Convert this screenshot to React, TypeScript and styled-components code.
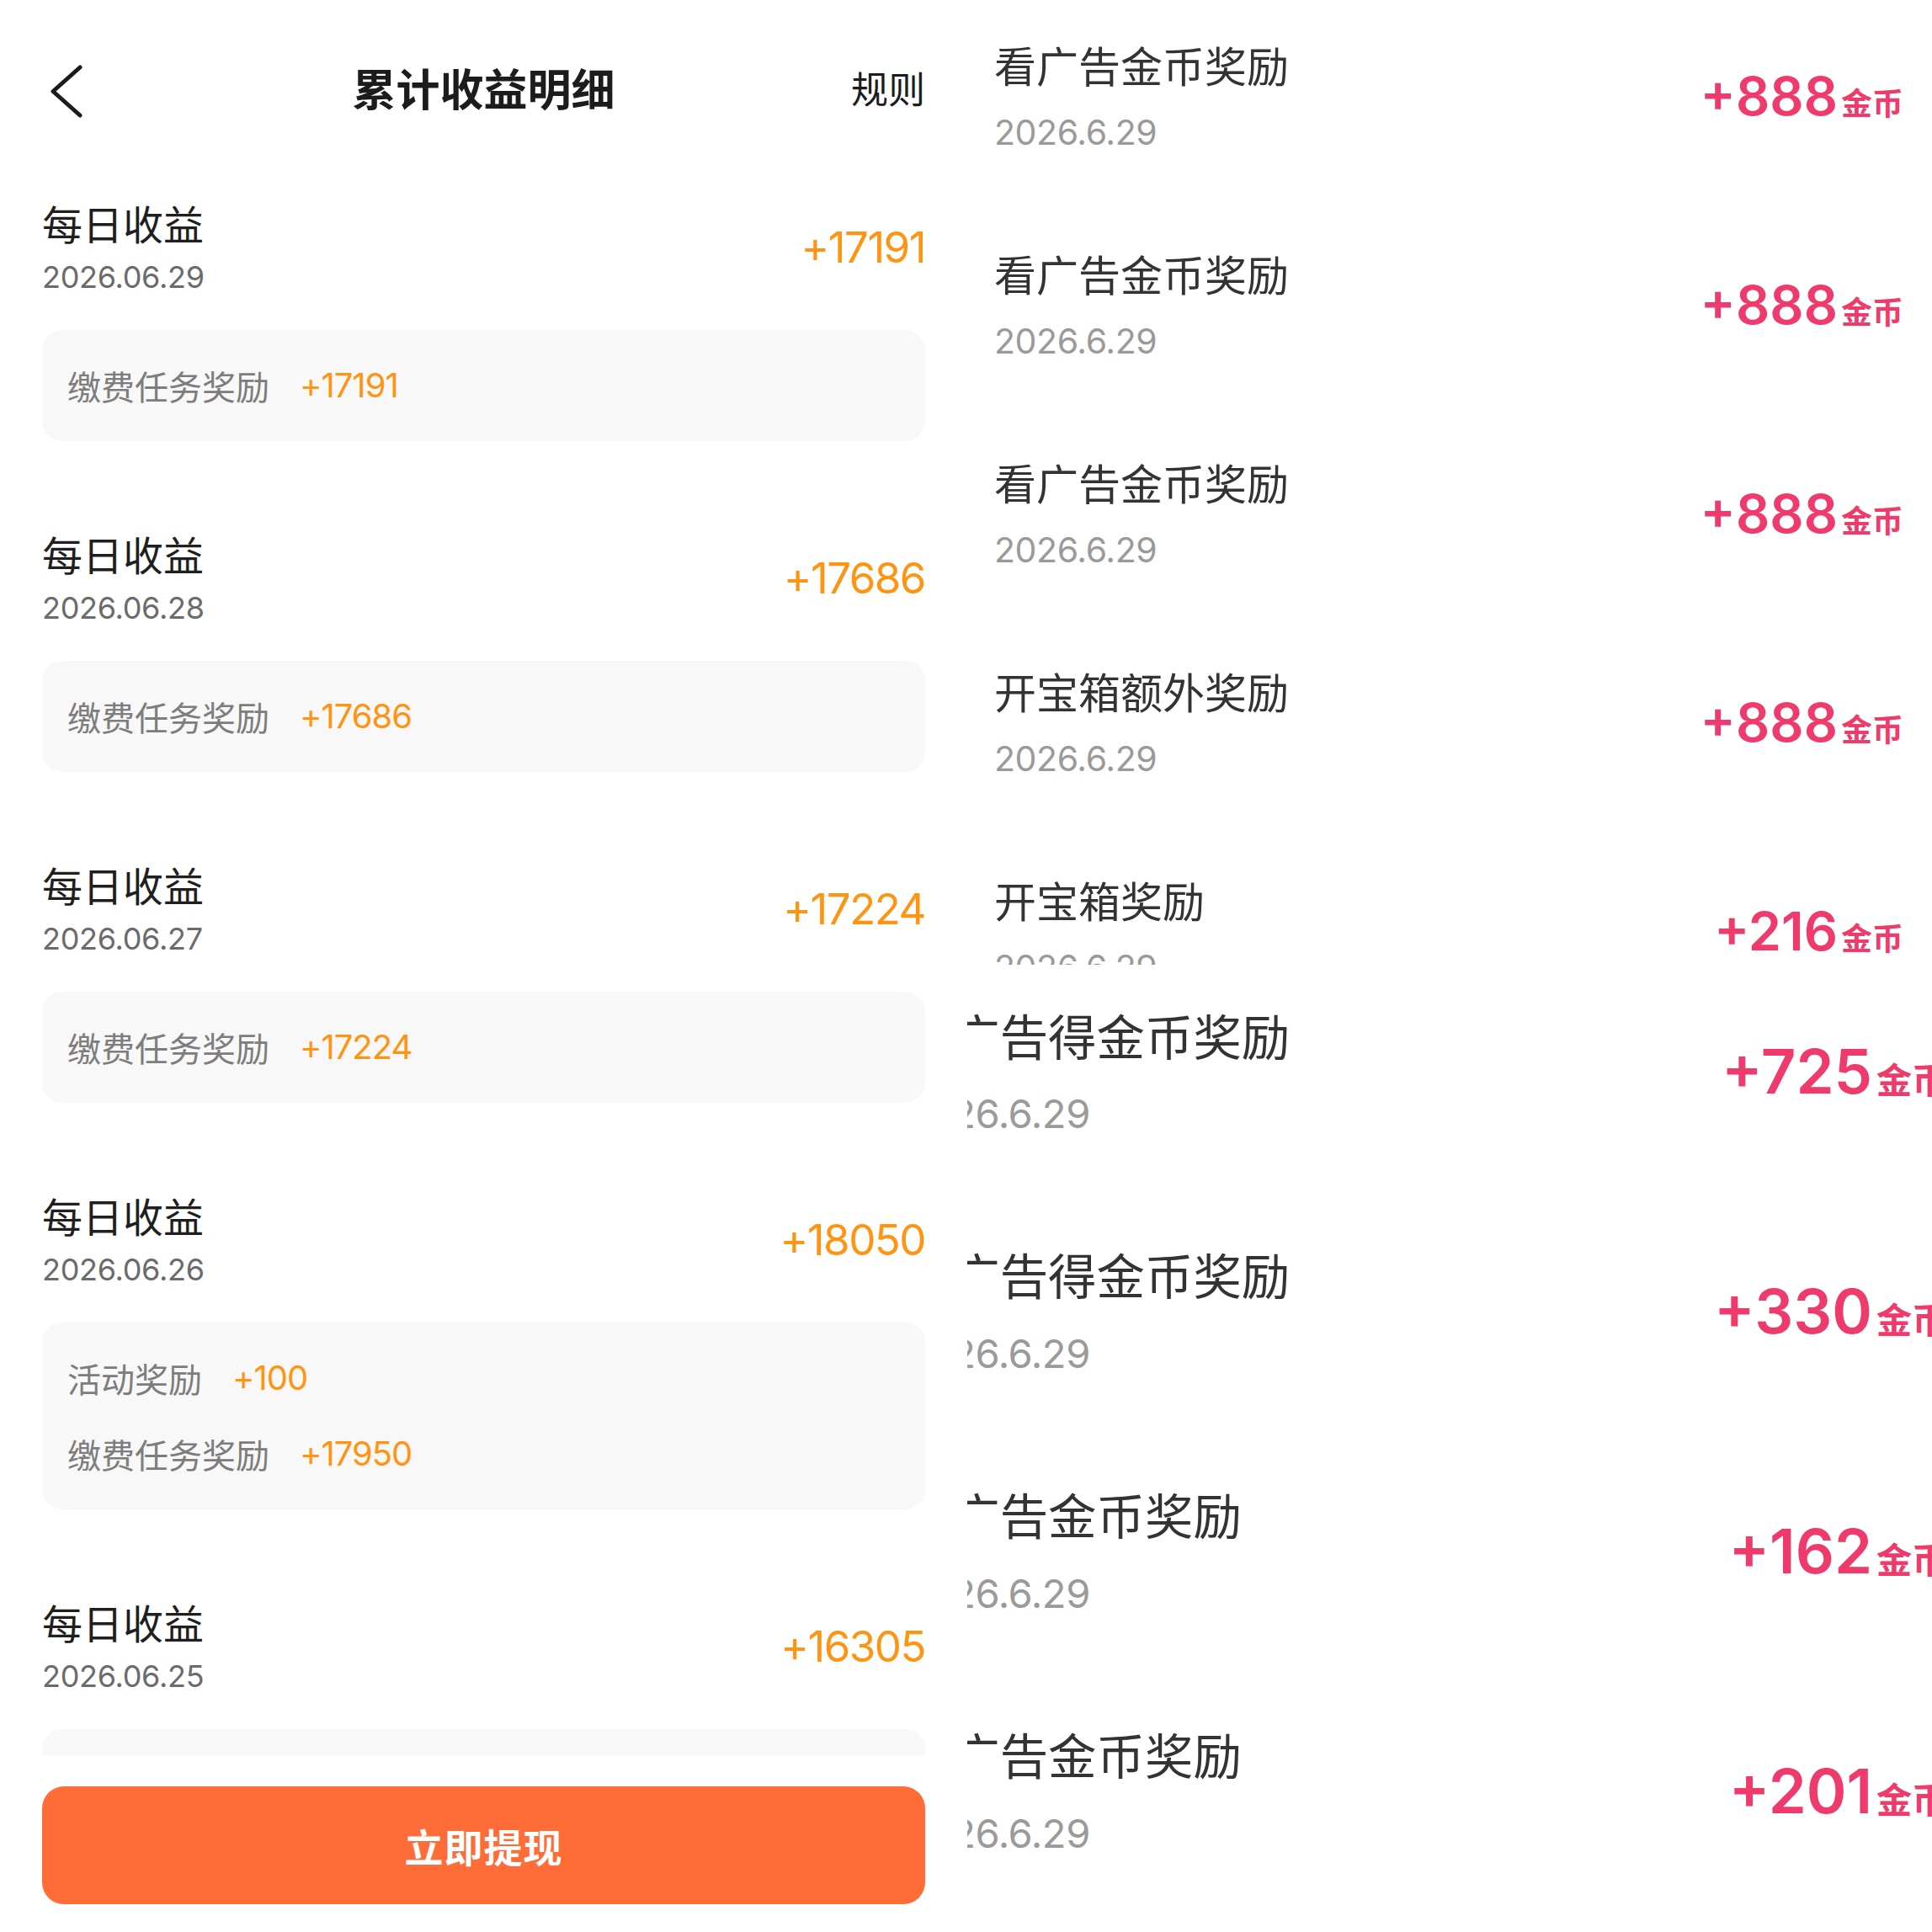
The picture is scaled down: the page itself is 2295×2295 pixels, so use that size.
import React from "react";
import styled, { createGlobalStyle } from "styled-components";

const CJK = `"Noto Sans CJK SC", "Noto Sans", sans-serif`;
const NUM = `Inter, "Noto Sans CJK SC", sans-serif`;

const GlobalStyle = createGlobalStyle`
  html, body { margin: 0; padding: 0; background: #ffffff; }
  body { font-family: ${CJK}; -webkit-font-smoothing: antialiased; }
  *, *::before, *::after { box-sizing: border-box; }
`;

const Canvas = styled.div`
  width: 2295px;
  height: 2295px;
  display: flex;
  overflow: hidden;
  background: #ffffff;
`;

/* ---------- left: 累计收益明细 ---------- */

const LeftPanel = styled.section`
  width: 1149px;
  flex: none;
  height: 100%;
  display: flex;
  flex-direction: column;
  background: #ffffff;
`;

const Header = styled.header`
  height: 208px;
  flex: none;
  display: grid;
  grid-template-columns: 1fr auto 1fr;
  align-items: center;
  padding: 0 50px;
`;

const BackButton = styled.button`
  justify-self: start;
  width: 44px;
  height: 72px;
  margin-left: 6px;
  padding: 0;
  border: 0;
  background: none;
  display: flex;
`;

const PageTitle = styled.h1`
  margin: 0;
  font-family: ${CJK};
  font-size: 52px;
  line-height: 1;
  font-weight: 700;
  color: #1c1c1e;
`;

const RuleLink = styled.span`
  justify-self: end;
  font-family: ${CJK};
  font-size: 44px;
  line-height: 1;
  color: #1c1c1e;
`;

const Feed = styled.div`
  flex: 1;
  min-height: 0;
  overflow: hidden;
  padding: 32px 50px 0;
  display: flex;
  flex-direction: column;
  gap: 109px;
`;

const DaySection = styled.article`
  display: flex;
  flex-direction: column;
  gap: 45px;
  flex: none;
`;

const DaySummary = styled.div`
  display: flex;
  align-items: center;
  justify-content: space-between;
`;

const DayInfo = styled.div`
  display: flex;
  flex-direction: column;
  gap: 23px;
`;

const DayTitle = styled.div`
  font-family: ${CJK};
  font-size: 48px;
  line-height: 48px;
  color: #1f1f1f;
`;

const DayDate = styled.div`
  font-family: ${NUM};
  font-size: 36px;
  line-height: 36px;
  color: #6b6b6b;
  letter-spacing: -0.3px;
`;

const DayTotal = styled.div`
  font-family: ${NUM};
  font-size: 51px;
  line-height: 1;
  color: #ff9412;
  letter-spacing: -1.5px;
`;

const BreakdownCard = styled.div`
  background: #f8f8f8;
  border-radius: 24px;
  padding: 38px 30px;
  display: flex;
  flex-direction: column;
  gap: 34px;
`;

const BreakdownRow = styled.div`
  height: 56px;
  display: flex;
  align-items: center;
  gap: 36px;
`;

const BreakdownLabel = styled.span`
  font-family: ${CJK};
  font-size: 40px;
  line-height: 1;
  color: #7d7d7d;
`;

const BreakdownValue = styled.span`
  font-family: ${NUM};
  font-size: 40px;
  line-height: 1;
  color: #ff9412;
  letter-spacing: -1px;
`;

const Footer = styled.footer`
  flex: none;
  padding: 37px 50px 33px;
  background: #ffffff;
`;

const WithdrawButton = styled.button`
  width: 100%;
  height: 140px;
  border: 0;
  border-radius: 26px;
  background: #fe6c37;
  color: #ffffff;
  font-family: ${CJK};
  font-size: 46px;
  font-weight: 700;
  letter-spacing: 1px;
`;

/* ---------- right: 金币记录 (two stitched captures) ---------- */

const RightPanel = styled.section`
  flex: 1;
  min-width: 0;
  height: 100%;
  display: flex;
  flex-direction: column;
  overflow: hidden;
  background: #ffffff;
`;

const Viewport = styled.div<{ $h: number }>`
  height: ${(p) => p.$h}px;
  flex: none;
  overflow: hidden;
`;

const RewardList = styled.ul<{ $scale: number; $dx: number; $dy: number }>`
  --s: ${(p) => p.$scale};
  list-style: none;
  margin: ${(p) => p.$dy}px 0 0 ${(p) => p.$dx}px;
  padding: 0;
  width: calc(1146px * var(--s));
`;

const RewardRow = styled.li`
  height: calc(248px * var(--s));
  display: flex;
  align-items: center;
  justify-content: space-between;
  padding: 0 calc(34px * var(--s)) 0 calc(32px * var(--s));
`;

const RewardInfo = styled.div`
  display: flex;
  flex-direction: column;
  gap: calc(36px * var(--s));
`;

const RewardTitle = styled.div`
  font-family: ${CJK};
  font-size: calc(50px * var(--s));
  line-height: 1;
  color: #333333;
  white-space: nowrap;
`;

const RewardDate = styled.div`
  font-family: ${NUM};
  font-size: calc(41px * var(--s));
  line-height: 1;
  color: #9a9a9a;
  letter-spacing: calc(-0.4px * var(--s));
`;

const RewardAmount = styled.div`
  font-family: ${NUM};
  font-size: calc(63px * var(--s));
  line-height: 1;
  font-weight: 600;
  color: #ef3b6b;
  white-space: nowrap;
`;

const CoinUnit = styled.span`
  font-family: ${CJK};
  font-size: calc(37px * var(--s));
  font-weight: 700;
  margin-left: calc(4px * var(--s));
`;

type Day = { date: string; total: string; items: { label: string; value: string }[] };

const days: Day[] = [
  { date: "2026.06.29", total: "+17191", items: [{ label: "缴费任务奖励", value: "+17191" }] },
  { date: "2026.06.28", total: "+17686", items: [{ label: "缴费任务奖励", value: "+17686" }] },
  { date: "2026.06.27", total: "+17224", items: [{ label: "缴费任务奖励", value: "+17224" }] },
  {
    date: "2026.06.26",
    total: "+18050",
    items: [
      { label: "活动奖励", value: "+100" },
      { label: "缴费任务奖励", value: "+17950" },
    ],
  },
  { date: "2026.06.25", total: "+16305", items: [{ label: "缴费任务奖励", value: "+16305" }] },
];

type Reward = { title: string; date: string; amount: string };

const topRewards: Reward[] = [
  { title: "看广告金币奖励", date: "2026.6.29", amount: "+888" },
  { title: "看广告金币奖励", date: "2026.6.29", amount: "+888" },
  { title: "看广告金币奖励", date: "2026.6.29", amount: "+888" },
  { title: "开宝箱额外奖励", date: "2026.6.29", amount: "+888" },
  { title: "开宝箱奖励", date: "2026.6.29", amount: "+216" },
];

const bottomRewards: Reward[] = [
  { title: "看广告得金币奖励", date: "2026.6.29", amount: "+725" },
  { title: "看广告得金币奖励", date: "2026.6.29", amount: "+330" },
  { title: "看广告金币奖励", date: "2026.6.29", amount: "+162" },
  { title: "看广告金币奖励", date: "2026.6.29", amount: "+201" },
];

function BackIcon() {
  return (
    <svg width="44" height="72" viewBox="0 0 44 72" fill="none">
      <polyline
        points="39,12 7,40.5 39,69"
        stroke="#1c1c1e"
        strokeWidth="5"
        strokeLinecap="round"
        strokeLinejoin="round"
      />
    </svg>
  );
}

function Rewards({ list, scale, dx, dy }: { list: Reward[]; scale: number; dx: number; dy: number }) {
  return (
    <RewardList $scale={scale} $dx={dx} $dy={dy}>
      {list.map((r, i) => (
        <RewardRow key={i}>
          <RewardInfo>
            <RewardTitle>{r.title}</RewardTitle>
            <RewardDate>{r.date}</RewardDate>
          </RewardInfo>
          <RewardAmount>
            {r.amount}
            <CoinUnit>金币</CoinUnit>
          </RewardAmount>
        </RewardRow>
      ))}
    </RewardList>
  );
}

export default function App() {
  return (
    <>
      <GlobalStyle />
      <Canvas>
        <LeftPanel>
          <Header>
            <BackButton aria-label="返回">
              <BackIcon />
            </BackButton>
            <PageTitle>累计收益明细</PageTitle>
            <RuleLink>规则</RuleLink>
          </Header>
          <Feed>
            {days.map((d) => (
              <DaySection key={d.date}>
                <DaySummary>
                  <DayInfo>
                    <DayTitle>每日收益</DayTitle>
                    <DayDate>{d.date}</DayDate>
                  </DayInfo>
                  <DayTotal>{d.total}</DayTotal>
                </DaySummary>
                <BreakdownCard>
                  {d.items.map((it) => (
                    <BreakdownRow key={it.label}>
                      <BreakdownLabel>{it.label}</BreakdownLabel>
                      <BreakdownValue>{it.value}</BreakdownValue>
                    </BreakdownRow>
                  ))}
                </BreakdownCard>
              </DaySection>
            ))}
          </Feed>
          <Footer>
            <WithdrawButton>立即提现</WithdrawButton>
          </Footer>
        </LeftPanel>
        <RightPanel>
          <Viewport $h={1146}>
            <Rewards list={topRewards} scale={1} dx={0} dy={-10} />
          </Viewport>
          <Viewport $h={1149}>
            <Rewards list={bottomRewards} scale={1.149} dx={-113} dy={-15} />
          </Viewport>
        </RightPanel>
      </Canvas>
    </>
  );
}
